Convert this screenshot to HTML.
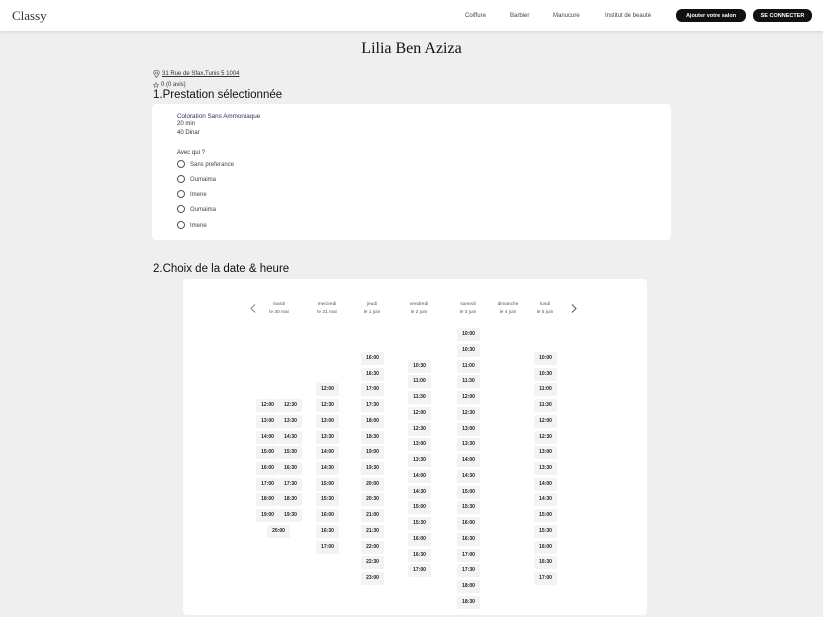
<!DOCTYPE html>
<html><head><meta charset="utf-8">
<style>
*{margin:0;padding:0;box-sizing:border-box}
body{width:823px;height:617px;overflow:hidden;background:#efefef;font-family:"Liberation Sans",sans-serif;position:relative;color:#222}
.hdr{position:absolute;left:0;top:0;width:823px;height:31px;background:#fff;box-shadow:0 1px 3px rgba(0,0,0,.12)}
.logo{position:absolute;left:12px;top:8px;font-family:"Liberation Serif",serif;font-size:13px;color:#333}
.nav{position:absolute;top:13px;font-size:6px;color:#444}
.btn{position:absolute;top:9px;height:13px;background:#111;color:#fff;border-radius:6px;font-size:5.5px;font-weight:bold;text-align:center;padding-top:4px;line-height:6px}
h1{position:absolute;left:0;width:823px;top:40px;text-align:center;font-family:"Liberation Serif",serif;font-weight:normal;font-size:16px;color:#111}
.sm{position:absolute;font-size:6px;color:#333}
h2{position:absolute;font-weight:normal;font-size:11.5px;color:#111}
.card{position:absolute;background:#fff;border-radius:4px}
.r{position:absolute;left:177px;font-size:6px;color:#444}
.r i{position:absolute;left:0;top:-2px;width:8px;height:8px;border:1px solid #555;border-radius:50%}
.r span{position:absolute;left:13px;top:0;white-space:nowrap}
.day{position:absolute;top:301px;width:50px;text-align:center;font-size:4.8px;color:#555;line-height:8px}
.s{position:absolute;width:23px;height:13px;background:#f3f3f3;border-radius:2px;font-size:5px;font-weight:bold;text-align:center;line-height:13px;color:#222;margin-top:1px}
</style></head><body>
<div class="hdr">
<div class="logo">Classy</div>
<div class="nav" style="left:465px">Coiffure</div>
<div class="nav" style="left:510px">Barbier</div>
<div class="nav" style="left:553px">Manucure</div>
<div class="nav" style="left:605px">Institut de beauté</div>
<div class="btn" style="left:676px;width:70px">Ajouter votre salon</div>
<div class="btn" style="left:753px;width:59px">SE CONNECTER</div>
</div>
<h1>Lilia Ben Aziza</h1>
<svg style="position:absolute;left:153px;top:70px" width="7" height="8" viewBox="0 0 7 8"><path d="M3.5 7.5C1.5 5 .7 4 .7 2.9a2.8 2.8 0 0 1 5.6 0C6.3 4 5.5 5 3.5 7.5z" fill="none" stroke="#555" stroke-width=".7"/><circle cx="3.5" cy="3" r="1" fill="none" stroke="#555" stroke-width=".6"/></svg>
<div class="sm" style="left:162px;top:71px;text-decoration:underline">31 Rue de Sfax,Tunis 5 1004</div>
<svg style="position:absolute;left:153px;top:82px" width="6" height="6" viewBox="0 0 10 10"><path d="M5 .8l1.3 2.8 3 .3-2.3 2 .7 3L5 7.4 2.3 8.9l.7-3-2.3-2 3-.3z" fill="none" stroke="#555" stroke-width=".9"/></svg>
<div class="sm" style="left:161px;top:82px">0 (0 avis)</div>
<h2 style="left:153px;top:89px">1.Prestation sélectionnée</h2>
<div class="card" style="left:152px;top:104px;width:519px;height:136px"></div>
<div class="sm" style="left:177px;top:113px;color:#2a3560;font-size:6.3px">Coloration Sans Ammoniaque</div>
<div class="sm" style="left:177px;top:121px">20 min</div>
<div class="sm" style="left:177px;top:130px">40 Dinar</div>
<div class="sm" style="left:177px;top:150px">Avec qui ?</div>
<div class="r" style="top:162px"><i></i><span>Sans preferance</span></div>
<div class="r" style="top:177px"><i></i><span>Oumaima</span></div>
<div class="r" style="top:192px"><i></i><span>Imene</span></div>
<div class="r" style="top:207px"><i></i><span>Oumaima</span></div>
<div class="r" style="top:223px"><i></i><span>Imene</span></div>
<h2 style="left:153px;top:263px">2.Choix de la date &amp; heure</h2>
<div class="card" style="left:183px;top:279px;width:464px;height:336px"></div>
<svg style="position:absolute;left:250px;top:304px" width="6" height="9" viewBox="0 0 6 9"><path d="M5 .5L1 4.5 5 8.5" fill="none" stroke="#888" stroke-width="1"/></svg>
<svg style="position:absolute;left:571px;top:304px" width="6" height="9" viewBox="0 0 6 9"><path d="M1 .5L5 4.5 1 8.5" fill="none" stroke="#555" stroke-width="1"/></svg>
<div class="day" style="left:254px">mardi<br>le 30 mai</div>
<div class="day" style="left:302px">mercredi<br>le 31 mai</div>
<div class="day" style="left:347px">jeudi<br>le 1 juin</div>
<div class="day" style="left:394px">vendredi<br>le 2 juin</div>
<div class="day" style="left:443px">samedi<br>le 3 juin</div>
<div class="day" style="left:483px">dimanche<br>le 4 juin</div>
<div class="day" style="left:520px">lundi<br>le 5 juin</div>
<!-- mardi -->
<div class="s" style="left:256px;top:398px">12:00</div><div class="s" style="left:279px;top:398px">12:30</div>
<div class="s" style="left:256px;top:414px">13:00</div><div class="s" style="left:279px;top:414px">13:30</div>
<div class="s" style="left:256px;top:430px">14:00</div><div class="s" style="left:279px;top:430px">14:30</div>
<div class="s" style="left:256px;top:445px">15:00</div><div class="s" style="left:279px;top:445px">15:30</div>
<div class="s" style="left:256px;top:461px">16:00</div><div class="s" style="left:279px;top:461px">16:30</div>
<div class="s" style="left:256px;top:477px">17:00</div><div class="s" style="left:279px;top:477px">17:30</div>
<div class="s" style="left:256px;top:492px">18:00</div><div class="s" style="left:279px;top:492px">18:30</div>
<div class="s" style="left:256px;top:508px">19:00</div><div class="s" style="left:279px;top:508px">19:30</div>
<div class="s" style="left:267px;top:524px">20:00</div>
<!-- mercredi -->
<div class="s" style="left:316px;top:382px">12:00</div>
<div class="s" style="left:316px;top:398px">12:30</div>
<div class="s" style="left:316px;top:414px">13:00</div>
<div class="s" style="left:316px;top:430px">13:30</div>
<div class="s" style="left:316px;top:445px">14:00</div>
<div class="s" style="left:316px;top:461px">14:30</div>
<div class="s" style="left:316px;top:477px">15:00</div>
<div class="s" style="left:316px;top:492px">15:30</div>
<div class="s" style="left:316px;top:508px">16:00</div>
<div class="s" style="left:316px;top:524px">16:30</div>
<div class="s" style="left:316px;top:540px">17:00</div>
<!-- jeudi -->
<div class="s" style="left:361px;top:351px">16:00</div>
<div class="s" style="left:361px;top:367px">16:30</div>
<div class="s" style="left:361px;top:382px">17:00</div>
<div class="s" style="left:361px;top:398px">17:30</div>
<div class="s" style="left:361px;top:414px">18:00</div>
<div class="s" style="left:361px;top:430px">18:30</div>
<div class="s" style="left:361px;top:445px">19:00</div>
<div class="s" style="left:361px;top:461px">19:30</div>
<div class="s" style="left:361px;top:477px">20:00</div>
<div class="s" style="left:361px;top:492px">20:30</div>
<div class="s" style="left:361px;top:508px">21:00</div>
<div class="s" style="left:361px;top:524px">21:30</div>
<div class="s" style="left:361px;top:540px">22:00</div>
<div class="s" style="left:361px;top:555px">22:30</div>
<div class="s" style="left:361px;top:571px">23:00</div>
<!-- vendredi -->
<div class="s" style="left:408px;top:359px">10:30</div>
<div class="s" style="left:408px;top:374px">11:00</div>
<div class="s" style="left:408px;top:390px">11:30</div>
<div class="s" style="left:408px;top:406px">12:00</div>
<div class="s" style="left:408px;top:422px">12:30</div>
<div class="s" style="left:408px;top:437px">13:00</div>
<div class="s" style="left:408px;top:453px">13:30</div>
<div class="s" style="left:408px;top:469px">14:00</div>
<div class="s" style="left:408px;top:485px">14:30</div>
<div class="s" style="left:408px;top:500px">15:00</div>
<div class="s" style="left:408px;top:516px">15:30</div>
<div class="s" style="left:408px;top:532px">16:00</div>
<div class="s" style="left:408px;top:548px">16:30</div>
<div class="s" style="left:408px;top:563px">17:00</div>
<!-- samedi -->
<div class="s" style="left:457px;top:327px">10:00</div>
<div class="s" style="left:457px;top:343px">10:30</div>
<div class="s" style="left:457px;top:359px">11:00</div>
<div class="s" style="left:457px;top:374px">11:30</div>
<div class="s" style="left:457px;top:390px">12:00</div>
<div class="s" style="left:457px;top:406px">12:30</div>
<div class="s" style="left:457px;top:422px">13:00</div>
<div class="s" style="left:457px;top:437px">13:30</div>
<div class="s" style="left:457px;top:453px">14:00</div>
<div class="s" style="left:457px;top:469px">14:30</div>
<div class="s" style="left:457px;top:485px">15:00</div>
<div class="s" style="left:457px;top:500px">15:30</div>
<div class="s" style="left:457px;top:516px">16:00</div>
<div class="s" style="left:457px;top:532px">16:30</div>
<div class="s" style="left:457px;top:548px">17:00</div>
<div class="s" style="left:457px;top:563px">17:30</div>
<div class="s" style="left:457px;top:579px">18:00</div>
<div class="s" style="left:457px;top:595px">18:30</div>
<!-- lundi -->
<div class="s" style="left:534px;top:351px">10:00</div>
<div class="s" style="left:534px;top:367px">10:30</div>
<div class="s" style="left:534px;top:382px">11:00</div>
<div class="s" style="left:534px;top:398px">11:30</div>
<div class="s" style="left:534px;top:414px">12:00</div>
<div class="s" style="left:534px;top:430px">12:30</div>
<div class="s" style="left:534px;top:445px">13:00</div>
<div class="s" style="left:534px;top:461px">13:30</div>
<div class="s" style="left:534px;top:477px">14:00</div>
<div class="s" style="left:534px;top:492px">14:30</div>
<div class="s" style="left:534px;top:508px">15:00</div>
<div class="s" style="left:534px;top:524px">15:30</div>
<div class="s" style="left:534px;top:540px">16:00</div>
<div class="s" style="left:534px;top:555px">16:30</div>
<div class="s" style="left:534px;top:571px">17:00</div>
</body></html>
